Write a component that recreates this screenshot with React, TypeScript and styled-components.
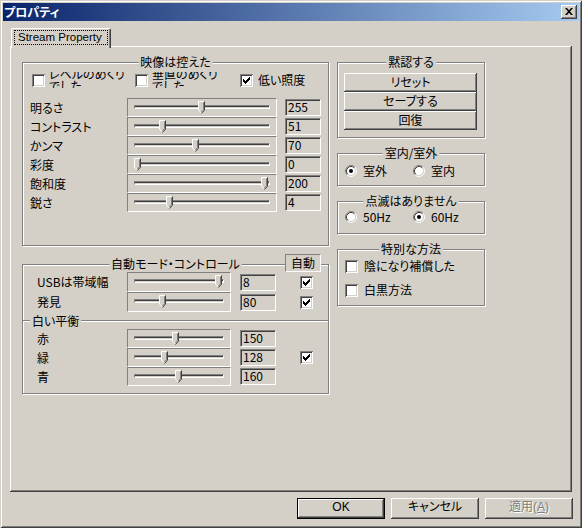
import React from 'react'
import styled, { createGlobalStyle, css } from 'styled-components'

const FACE = '#d4d0c8'
const HI = '#ffffff'
const SHADOW = '#808080'
const DARK = '#404040'

const GlobalStyle = createGlobalStyle`
  html, body {
    margin: 0;
    padding: 0;
    background: ${FACE};
  }
  body {
    font-family: "Noto Sans CJK JP", "Noto Sans", sans-serif;
    font-size: 12px;
    font-feature-settings: "palt";
    color: #000;
  }
  * {
    box-sizing: border-box;
  }
`

const raised = css`
  background: ${FACE};
  box-shadow: inset -1px -1px 0 ${DARK}, inset 1px 1px 0 ${HI}, inset -2px -2px 0 ${SHADOW};
`

const sunken = css`
  border-style: solid;
  border-width: 1px;
  border-color: ${SHADOW} ${HI} ${HI} ${SHADOW};
`

const Window = styled.div`
  width: 582px;
  height: 528px;
  padding: 3px;
  display: flex;
  flex-direction: column;
  background: ${FACE};
  box-shadow: inset 1px 1px 0 ${FACE}, inset -1px -1px 0 ${DARK}, inset 2px 2px 0 ${HI},
    inset -2px -2px 0 ${SHADOW};
`

const TitleBar = styled.div`
  flex: none;
  height: 18px;
  display: flex;
  align-items: center;
  justify-content: space-between;
  padding: 0 2px 0 1px;
  background: linear-gradient(to right, #0a246a, #a6caf0);
  color: #fff;
  font-weight: bold;
  line-height: 14px;
`

const CloseBtn = styled.div`
  ${raised};
  width: 16px;
  height: 14px;
  display: flex;
  align-items: center;
  justify-content: center;
  padding-bottom: 1px;
`

const Content = styled.div`
  flex: 1;
  display: flex;
  flex-direction: column;
  padding: 7px 7px 0 7px;
`

const TabStrip = styled.div`
  height: 18px;
  display: flex;
  padding-left: 1px;
`

const Tab = styled.div`
  position: relative;
  z-index: 1;
  height: 20px;
  padding: 1px 2px 0 2px;
  background: ${FACE};
  border-top: 1px solid ${HI};
  border-left: 1px solid ${HI};
  border-right: 1px solid ${DARK};
  border-radius: 2px 2px 0 0;
  box-shadow: inset -1px 0 0 ${SHADOW};
  font-family: "Liberation Sans", Arial, sans-serif;
  font-size: 11.5px;
`

const FocusRect = styled.span`
  display: block;
  border: 1px dotted #000;
  padding: 0 5px 0 3px;
  line-height: 13px;
`

const Panel = styled.div`
  height: 446px;
  display: flex;
  gap: 7px;
  padding: 16px 0 0 12px;
  box-shadow: inset -1px -1px 0 ${DARK}, inset 1px 1px 0 ${HI}, inset -2px -2px 0 ${SHADOW};
`

const Column = styled.div<{ $w: number; $gap: number }>`
  width: ${p => p.$w}px;
  display: flex;
  flex-direction: column;
  gap: ${p => p.$gap}px;
`

const Group = styled.div<{ $h: number; $pad: string }>`
  position: relative;
  width: calc(100% - 1px);
  height: ${p => p.$h - 1}px;
  padding: ${p => p.$pad};
  border: 1px solid ${SHADOW};
  box-shadow: inset 1px 1px 0 ${HI}, 1px 1px 0 ${HI};
`

const Legend = styled.span`
  position: absolute;
  top: -8px;
  left: 50%;
  transform: translateX(-50%);
  padding: 0 2px;
  background: ${FACE};
  line-height: 14px;
  white-space: nowrap;
`

const CheckRow = styled.div`
  display: flex;
  height: 16px;
  margin: 0 0 10px 2px;
`

const CheckItem = styled.div<{ $w?: number; $gap: number }>`
  display: flex;
  align-items: center;
  gap: ${p => p.$gap}px;
  width: ${p => (p.$w ? `${p.$w}px` : 'auto')};
  height: 16px;
  line-height: 14px;
  white-space: nowrap;
`

const ClipLabel = styled.span`
  height: 16px;
  overflow: hidden;
  display: flex;
  align-items: center;
  line-height: 12px;
`

const Box = styled.span`
  flex: none;
  width: 13px;
  height: 13px;
  display: flex;
  align-items: center;
  justify-content: center;
  background: #fff;
  box-shadow: inset 1px 1px 0 ${SHADOW}, inset -1px -1px 0 ${HI}, inset 2px 2px 0 ${DARK},
    inset -2px -2px 0 ${FACE};
`

const SliderRow = styled.div<{ $h: number }>`
  display: flex;
  align-items: center;
  height: ${p => p.$h}px;
`

const RowLabel = styled.span<{ $w: number }>`
  width: ${p => p.$w}px;
  line-height: 14px;
  white-space: nowrap;
`

const SliderBox = styled.div<{ $w: number }>`
  width: ${p => p.$w}px;
  height: 100%;
  padding: 6px 6px 0 6px;
  border-style: solid;
  border-width: 1px;
  border-color: ${SHADOW} ${HI} ${HI} ${SHADOW};
`

const Track = styled.div`
  position: relative;
  height: 4px;
  border-style: solid;
  border-width: 1px;
  border-color: ${SHADOW} ${HI} ${HI} ${SHADOW};
  background: ${FACE};
  box-shadow: inset 0 1px 0 ${DARK};
`

const Thumb = styled.svg`
  position: absolute;
  top: -5px;
  display: block;
`

const ValueBox = styled.div<{ $ml: number }>`
  ${sunken};
  width: 36px;
  height: 17px;
  margin-left: ${p => p.$ml}px;
  padding-left: 2px;
  line-height: 14px;
  box-shadow: inset 1px 1px 0 ${DARK};
`

const CheckCell = styled.div`
  margin-left: 24px;
  display: flex;
`

const AutoHeader = styled.div`
  ${sunken};
  position: absolute;
  top: -11px;
  left: 262px;
  width: 36px;
  height: 18px;
  background: ${FACE};
  text-align: center;
  line-height: 15px;
`

const Rows = styled.div`
  padding-left: 14px;
`

const Separator = styled.div`
  height: 17px;
  display: flex;
  align-items: center;
`

const SepLine = styled.span<{ $w?: number }>`
  height: 2px;
  border-top: 1px solid ${SHADOW};
  border-bottom: 1px solid ${HI};
  ${p => (p.$w ? `width: ${p.$w}px;` : 'flex: 1;')}
`

const SepText = styled.span`
  padding: 0 2px;
  line-height: 14px;
`

const StackButton = styled.div`
  ${raised};
  height: 19px;
  text-align: center;
  line-height: 18px;
`

const RadioRow = styled.div`
  display: flex;
`

const ChecksColumn = styled.div`
  display: flex;
  flex-direction: column;
  gap: 8px;
`

const ButtonBar = styled.div`
  display: flex;
  justify-content: flex-end;
  gap: 6px;
  padding-top: 6px;
  margin-right: -1px;
`

const PushButton = styled.div<{ $default?: boolean; $disabled?: boolean }>`
  ${raised};
  width: 88px;
  height: 21px;
  text-align: center;
  line-height: 19px;
  font-family: "Liberation Sans", "Noto Sans CJK JP", sans-serif;
  ${p => p.$default && `border: 1px solid #000; line-height: 17px;`}
  ${p => p.$disabled && `color: ${SHADOW}; text-shadow: 1px 1px 0 ${HI};`}
`

const CheckBox = ({ checked }: { checked?: boolean }) => (
  <Box>
    {checked && (
      <svg width="7" height="7" viewBox="0 0 7 7" shapeRendering="crispEdges">
        <path d="M0 2h1v3H0zM1 3h1v3H1zM2 4h1v3H2zM3 3h1v3H3zM4 2h1v3H4zM5 1h1v3H5zM6 0h1v3H6z" fill="#000" />
      </svg>
    )}
  </Box>
)

const Radio = ({ checked }: { checked?: boolean }) => (
  <svg width="12" height="12" viewBox="0 0 12 12" style={{ flex: 'none' }}>
    <circle cx="6" cy="6" r="4.5" fill="#fff" />
    <path d="M2.11 9.89A5.5 5.5 0 0 1 9.89 2.11" stroke={SHADOW} fill="none" />
    <path d="M9.89 2.11A5.5 5.5 0 0 1 2.11 9.89" stroke={HI} fill="none" />
    <path d="M2.82 9.18A4.5 4.5 0 0 1 9.18 2.82" stroke={DARK} fill="none" />
    <path d="M9.18 2.82A4.5 4.5 0 0 1 2.82 9.18" stroke={FACE} fill="none" />
    {checked && <circle cx="6" cy="6" r="2" fill="#000" />}
  </svg>
)

const Slider: React.FC<{ w: number; pos: number }> = ({ w, pos }) => (
  <SliderBox $w={w}>
    <Track>
      <Thumb
        width="7"
        height="13"
        viewBox="0 0 7 13"
        style={{ left: `calc(${pos} * (100% - 7px) - 1px)` }}
      >
        <path d="M0.5 0.5H6.5V9L3.5 12.5L0.5 9Z" fill={FACE} />
        <path d="M0.5 9V0.5H6" stroke={HI} fill="none" />
        <path d="M0.5 9L3 11.8" stroke={HI} fill="none" />
        <path d="M6.5 0.5V9L3.5 12.5" stroke={DARK} fill="none" />
        <path d="M5.5 1.5V8.6L3.5 11" stroke={SHADOW} fill="none" />
      </Thumb>
    </Track>
  </SliderBox>
)

type Adjust = { label: string; value: string; pos: number; auto?: boolean }

const picture: Adjust[] = [
  { label: '明るさ', value: '255', pos: 0.5 },
  { label: 'コントラスト', value: '51', pos: 0.2 },
  { label: 'かンマ', value: '70', pos: 0.46 },
  { label: '彩度', value: '0', pos: 0 },
  { label: '飽和度', value: '200', pos: 1 },
  { label: '鋭さ', value: '4', pos: 0.25 },
]

const autoMode: Adjust[] = [
  { label: 'USBは帯域幅', value: '8', pos: 1, auto: true },
  { label: '発見', value: '80', pos: 0.31, auto: true },
]

const whiteBalance: Adjust[] = [
  { label: '赤', value: '150', pos: 0.47 },
  { label: '緑', value: '128', pos: 0.33, auto: true },
  { label: '青', value: '160', pos: 0.5 },
]

const AutoRow: React.FC<{ row: Adjust; h: number }> = ({ row, h }) => (
  <SliderRow $h={h}>
    <RowLabel $w={90}>{row.label}</RowLabel>
    <Slider w={104} pos={row.pos} />
    <ValueBox $ml={9}>{row.value}</ValueBox>
    {row.auto && (
      <CheckCell>
        <CheckBox checked />
      </CheckCell>
    )}
  </SliderRow>
)

export default function App() {
  return (
    <>
      <GlobalStyle />
      <Window>
        <TitleBar>
          <span>プロパティ</span>
          <CloseBtn>
            <svg width="8" height="7" viewBox="0 0 8 7">
              <path d="M0 0h2l2 2.3L6 0h2L5 3.5 8 7H6L4 4.7 2 7H0l3-3.5z" fill="#000" />
            </svg>
          </CloseBtn>
        </TitleBar>
        <Content>
          <TabStrip>
            <Tab>
              <FocusRect>Stream Property</FocusRect>
            </Tab>
          </TabStrip>
          <Panel>
            <Column $w={308} $gap={18}>
              <Group $h={185} $pad="9px 0 0 7px">
                <Legend>映像は控えた</Legend>
                <CheckRow>
                  <CheckItem $w={103} $gap={4}>
                    <CheckBox />
                    <ClipLabel>
                      <span>
                        レベルのめくり
                        <br />
                        でした
                      </span>
                    </ClipLabel>
                  </CheckItem>
                  <CheckItem $w={105} $gap={4}>
                    <CheckBox />
                    <ClipLabel>
                      <span>
                        垂直のめくり
                        <br />
                        でした
                      </span>
                    </ClipLabel>
                  </CheckItem>
                  <CheckItem $gap={5}>
                    <CheckBox checked />
                    <span>低い照度</span>
                  </CheckItem>
                </CheckRow>
                {picture.map(row => (
                  <SliderRow key={row.label} $h={19}>
                    <RowLabel $w={97}>{row.label}</RowLabel>
                    <Slider w={150} pos={row.pos} />
                    <ValueBox $ml={8}>{row.value}</ValueBox>
                  </SliderRow>
                ))}
              </Group>
              <Group $h={131} $pad="7px 0 0 0">
                <Legend>自動モード・コントロール</Legend>
                <AutoHeader>自動</AutoHeader>
                <Rows>
                  {autoMode.map(row => (
                    <AutoRow key={row.label} row={row} h={20} />
                  ))}
                </Rows>
                <Separator>
                  <SepLine $w={7} />
                  <SepText>白い平衡</SepText>
                  <SepLine />
                </Separator>
                <Rows>
                  {whiteBalance.map(row => (
                    <AutoRow key={row.label} row={row} h={19} />
                  ))}
                </Rows>
              </Group>
            </Column>
            <Column $w={149} $gap={15}>
              <Group $h={77} $pad="10px 7px 0 6px">
                <Legend>黙認する</Legend>
                <StackButton>リセット</StackButton>
                <StackButton>セーブする</StackButton>
                <StackButton>回復</StackButton>
              </Group>
              <Group $h={34} $pad="9px 0 0 7px">
                <Legend>室内/室外</Legend>
                <RadioRow>
                  <CheckItem $w={68} $gap={6}>
                    <Radio checked />
                    <span>室外</span>
                  </CheckItem>
                  <CheckItem $gap={6}>
                    <Radio />
                    <span>室内</span>
                  </CheckItem>
                </RadioRow>
              </Group>
              <Group $h={34} $pad="7px 0 0 7px">
                <Legend>点滅はありません</Legend>
                <RadioRow>
                  <CheckItem $w={68} $gap={6}>
                    <Radio />
                    <span>50Hz</span>
                  </CheckItem>
                  <CheckItem $gap={6}>
                    <Radio checked />
                    <span>60Hz</span>
                  </CheckItem>
                </RadioRow>
              </Group>
              <Group $h={58} $pad="8px 0 0 7px">
                <Legend>特別な方法</Legend>
                <ChecksColumn>
                  <CheckItem $gap={6}>
                    <CheckBox />
                    <span>陰になり補償した</span>
                  </CheckItem>
                  <CheckItem $gap={6}>
                    <CheckBox />
                    <span>白黒方法</span>
                  </CheckItem>
                </ChecksColumn>
              </Group>
            </Column>
          </Panel>
          <ButtonBar>
            <PushButton $default>OK</PushButton>
            <PushButton>キャンセル</PushButton>
            <PushButton $disabled>
              適用(<u>A</u>)
            </PushButton>
          </ButtonBar>
        </Content>
      </Window>
    </>
  )
}
